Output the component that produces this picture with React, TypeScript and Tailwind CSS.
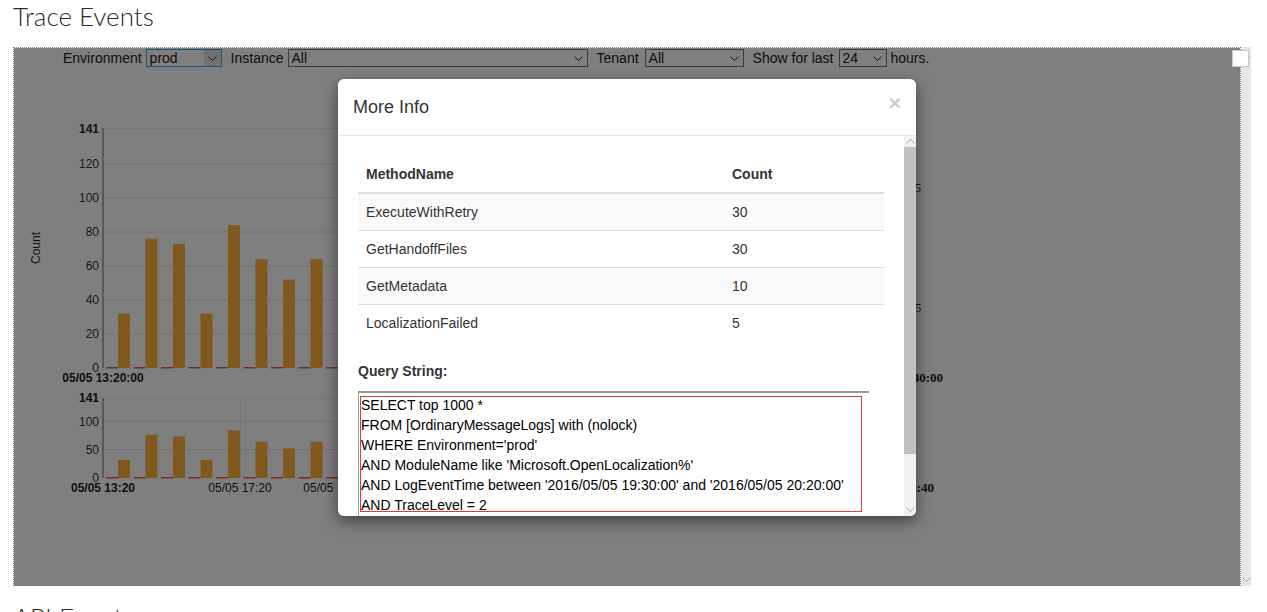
import React from 'react'

const counts = [32, 76, 73, 32, 84, 64, 52, 64, 40, 58, 71, 45, 66, 30, 55, 62, 48, 70, 36, 60, 52, 44, 68, 39, 57, 61, 33, 50, 46]

const methods = [
  { name: 'ExecuteWithRetry', count: 30 },
  { name: 'GetHandoffFiles', count: 30 },
  { name: 'GetMetadata', count: 10 },
  { name: 'LocalizationFailed', count: 5 },
]

const query = [
  'SELECT top 1000 *',
  'FROM [OrdinaryMessageLogs] with (nolock)',
  "WHERE Environment='prod'",
  "AND ModuleName like 'Microsoft.OpenLocalization%'",
  "AND LogEventTime between '2016/05/05 19:30:00' and '2016/05/05 20:20:00'",
  'AND TraceLevel = 2',
]

function Chevron({ up = false, color = '#333' }: { up?: boolean; color?: string }) {
  return (
    <svg width="9" height="5" viewBox="0 0 9 5" className="block">
      <polyline
        points={up ? '0.5,4.5 4.5,0.5 8.5,4.5' : '0.5,0.5 4.5,4.5 8.5,0.5'}
        fill="none"
        stroke={color}
        strokeWidth="1"
      />
    </svg>
  )
}

function FakeSelect({ value, width, focused = false }: { value: string; width: string; focused?: boolean }) {
  return (
    <div
      className={`flex h-[18px] items-stretch border bg-white ${width} ${focused ? 'border-[#3fa9e8]' : 'border-[#767676]'}`}
    >
      <span className="flex-1 pl-[3px] leading-[16px]">{value}</span>
      <span className={`flex w-[17px] items-center justify-center ${focused ? 'bg-[#e3e3e3]' : ''}`}>
        <Chevron />
      </span>
    </div>
  )
}

function Bars({ base, scale }: { base: number; scale: number }) {
  return (
    <>
      {counts.map((c, i) => {
        const x = 118 + 27.5 * i
        return (
          <g key={i}>
            <rect x={x - 12} y={base - 1} width={12} height={1.5} fill="#f25656" />
            <rect x={x} y={base - c * scale} width={12} height={c * scale} fill="#ffb33d" />
          </g>
        )
      })}
    </>
  )
}

function TopChart() {
  const y = (v: number) => 368 - v * 1.7
  const ticks = [120, 100, 80, 60, 40, 20]
  return (
    <svg width={1226} height={290} viewBox="14 100 1226 290" className="block" fontFamily="'Liberation Sans', Arial, sans-serif">
      <line x1={104} x2={905} y1={128.5} y2={128.5} stroke="#ececec" />
      {ticks.map((t) => (
        <line key={t} x1={104} x2={905} y1={y(t)} y2={y(t)} stroke="#e4e4e4" />
      ))}
      <Bars base={368} scale={1.7} />
      <line x1={103} x2={103} y1={128} y2={368} stroke="#9a9a9a" strokeWidth={1.5} />
      <text x={36} y={252.3} transform="rotate(-90 36 248)" textAnchor="middle" fontSize={12} fill="#333">
        Count
      </text>
      <text x={99} y={132.5} textAnchor="end" fontSize={12} fontWeight="bold" fill="#222">
        141
      </text>
      {[...ticks, 0].map((t) => (
        <text key={t} x={99} y={y(t) + 4.3} textAnchor="end" fontSize={12} fill="#333">
          {t}
        </text>
      ))}
      <text x={103} y={382} textAnchor="middle" fontSize={12} fontWeight="bold" fill="#222">
        05/05 13:20:00
      </text>
      <g fontFamily="'Liberation Serif', 'Times New Roman', serif" fontSize={13} fill="#222">
        <text x={908} y={191.5}>15</text>
        <text x={905} y={312}>0.5</text>
        <text x={943} y={382} textAnchor="end" fontWeight="bold">
          05/05 20:40:00
        </text>
      </g>
    </svg>
  )
}

function BottomChart() {
  const s = 80 / 141
  const y = (v: number) => 478 - v * s
  return (
    <svg width={1226} height={110} viewBox="14 390 1226 110" className="block" fontFamily="'Liberation Sans', Arial, sans-serif">
      <line x1={104} x2={905} y1={398.5} y2={398.5} stroke="#ececec" />
      <line x1={104} x2={905} y1={y(100)} y2={y(100)} stroke="#e4e4e4" />
      <line x1={104} x2={905} y1={y(50)} y2={y(50)} stroke="#e4e4e4" />
      <line x1={240.5} x2={240.5} y1={398} y2={478} stroke="#e4e4e4" />
      <Bars base={478} scale={s} />
      <line x1={103} x2={103} y1={398} y2={478} stroke="#9a9a9a" strokeWidth={1.5} />
      <text x={99} y={402.3} textAnchor="end" fontSize={12} fontWeight="bold" fill="#222">
        141
      </text>
      <text x={99} y={y(100) + 4.3} textAnchor="end" fontSize={12} fill="#333">
        100
      </text>
      <text x={99} y={y(50) + 4.3} textAnchor="end" fontSize={12} fill="#333">
        50
      </text>
      <text x={99} y={482} textAnchor="end" fontSize={12} fill="#333">
        0
      </text>
      <text x={103} y={492} textAnchor="middle" fontSize={12} fontWeight="bold" fill="#222">
        05/05 13:20
      </text>
      <text x={240} y={492} textAnchor="middle" fontSize={12} fill="#222">
        05/05 17:20
      </text>
      <text x={335} y={492} textAnchor="middle" fontSize={12} fill="#222">
        05/05 19:20
      </text>
      <text x={934} y={492} textAnchor="end" fontFamily="'Liberation Serif', 'Times New Roman', serif" fontSize={13} fontWeight="bold" fill="#222">
        05/05 22:40
      </text>
    </svg>
  )
}

function MoreInfoModal() {
  return (
    <div className="absolute left-[324px] top-[31px] flex h-[437px] w-[578px] flex-col overflow-hidden rounded-md bg-white font-['Liberation_Sans',Arial,sans-serif] text-[#333] shadow-[0_5px_15px_rgba(0,0,0,0.5)]">
      <div className="relative flex h-[57px] shrink-0 items-center border-b border-[#e5e5e5] px-[15px]">
        <h4 className="text-[18px] leading-5">More Info</h4>
        <span className="absolute right-[15px] top-[13px] text-[21px] font-bold leading-none text-[#cccccc]">×</span>
      </div>
      <div className="flex min-h-0 flex-1">
        <div className="min-w-0 flex-1 overflow-hidden px-5 pt-5">
          <table className="mb-5 w-full table-fixed border-collapse text-left text-[14px] leading-5">
            <thead>
              <tr>
                <th className="w-[366px] border-b-2 border-[#dddddd] p-2 font-bold">MethodName</th>
                <th className="border-b-2 border-[#dddddd] p-2 font-bold">Count</th>
              </tr>
            </thead>
            <tbody>
              {methods.map((m, i) => (
                <tr key={m.name} className={i % 2 === 0 ? 'bg-[#f9f9f9]' : ''}>
                  <td className="border-t border-[#dddddd] p-2">{m.name}</td>
                  <td className="border-t border-[#dddddd] p-2">{m.count}</td>
                </tr>
              ))}
            </tbody>
          </table>
          <div className="text-[14px] font-bold leading-5">Query String:</div>
          <div className="mr-[15px] mt-[10px] h-[140px] border-l border-t-2 border-l-[#9a9a9a] border-t-[#9a9a9a] pl-px pt-[3px]">
            <div className="h-[116px] w-[502px] overflow-hidden border border-[#e53935]">
              <div className="-mt-[2px] text-[14px] leading-5 whitespace-nowrap text-black">
                {query.map((line) => (
                  <div key={line}>{line}</div>
                ))}
              </div>
            </div>
          </div>
        </div>
        <div className="flex w-[12px] shrink-0 flex-col bg-[#f1f1f1]">
          <div className="flex h-[11px] items-center justify-center">
            <Chevron up color="#a3a3a3" />
          </div>
          <div className="h-[307px] bg-[#c1c1c1]" />
          <div className="flex-1" />
          <div className="flex h-[13px] items-center justify-center">
            <Chevron color="#a3a3a3" />
          </div>
        </div>
      </div>
    </div>
  )
}

export default function App() {
  return (
    <div className="h-[612px] overflow-hidden bg-white px-[13px]">
      <h1 className="font-['Lato','Open_Sans',sans-serif] text-[26px] font-light leading-[32px] text-[#2b2b2b]">Trace Events</h1>

      <div className="relative mt-[15px] flex h-[539px] w-[1238px]">
        <div className="relative flex-1 overflow-hidden border-x border-t border-dotted border-[#808080] bg-white">
          <div className="flex items-center pl-[49px] pt-px font-['Liberation_Sans',Arial,sans-serif] text-[14px] leading-[18px] text-[#222]">
            <span className="mr-1">Environment</span>
            <FakeSelect value="prod" width="w-[76px]" focused />
            <span className="ml-[9px] mr-1">Instance</span>
            <FakeSelect value="All" width="w-[300px]" />
            <span className="ml-[9px] mr-[6px]">Tenant</span>
            <FakeSelect value="All" width="w-[99px]" />
            <span className="ml-[9px] mr-[5px]">Show for last</span>
            <FakeSelect value="24" width="w-[48px]" />
            <span className="ml-1">hours.</span>
          </div>
          <div className="mt-[33px]">
            <TopChart />
            <BottomChart />
          </div>

          <div className="absolute inset-0 bg-black/50" />
          <MoreInfoModal />
        </div>

        <div className="flex w-[10px] flex-col justify-between bg-[#e6e6e6] pb-[4px] pt-[6px]">
          <div className="flex justify-center">
            <Chevron up color="#a8a8a8" />
          </div>
          <div className="flex justify-center">
            <Chevron color="#a8a8a8" />
          </div>
        </div>

        <div className="absolute right-[2px] top-[3px] h-[17px] w-[17px] border border-[#c8c8c8] bg-white" />
      </div>

      <h2 className="mt-[15px] font-['Lato','Open_Sans',sans-serif] text-[26px] font-light leading-[32px] text-[#2b2b2b]">API Events</h2>
    </div>
  )
}
